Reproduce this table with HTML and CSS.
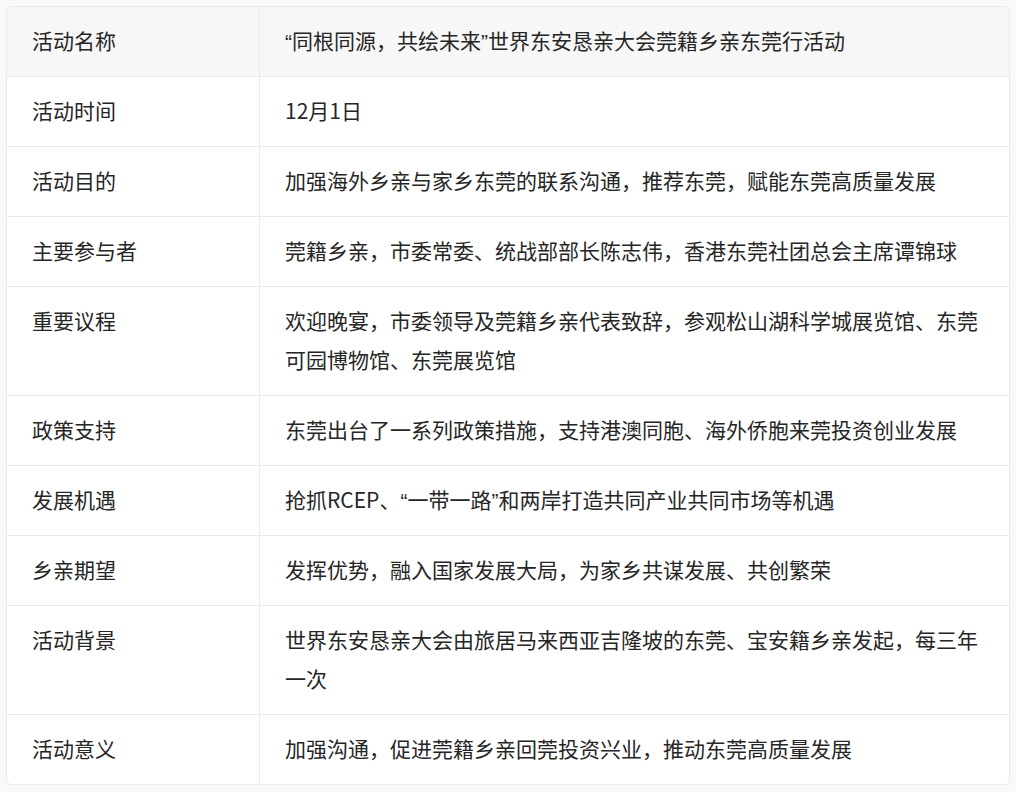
FILE: index.html
```html
<!DOCTYPE html>
<html lang="zh-CN">
<head>
<meta charset="utf-8">
<title>活动信息</title>
<link rel="stylesheet" href="styles.css">
</head>
<body>
<div class="card">
  <table class="info">
    <tbody>
      <tr class="head"><td class="k">活动名称</td><td class="v"><span class="q">“</span>同根同源，共绘未来<span class="q">”</span>世界东安恳亲大会莞籍乡亲东莞行活动</td></tr>
      <tr><td class="k">活动时间</td><td class="v">12月1日</td></tr>
      <tr><td class="k">活动目的</td><td class="v">加强海外乡亲与家乡东莞的联系沟通，推荐东莞，赋能东莞高质量发展</td></tr>
      <tr><td class="k">主要参与者</td><td class="v">莞籍乡亲，市委常委、统战部部长陈志伟，香港东莞社团总会主席谭锦球</td></tr>
      <tr><td class="k">重要议程</td><td class="v">欢迎晚宴，市委领导及莞籍乡亲代表致辞，参观松山湖科学城展览馆、东莞可园博物馆、东莞展览馆</td></tr>
      <tr><td class="k">政策支持</td><td class="v">东莞出台了一系列政策措施，支持港澳同胞、海外侨胞来莞投资创业发展</td></tr>
      <tr><td class="k">发展机遇</td><td class="v">抢抓RCEP、<span class="q">“</span>一带一路<span class="q">”</span>和两岸打造共同产业共同市场等机遇</td></tr>
      <tr><td class="k">乡亲期望</td><td class="v">发挥优势，融入国家发展大局，为家乡共谋发展、共创繁荣</td></tr>
      <tr><td class="k">活动背景</td><td class="v">世界东安恳亲大会由旅居马来西亚吉隆坡的东莞、宝安籍乡亲发起，每三年一次</td></tr>
      <tr class="last"><td class="k">活动意义</td><td class="v">加强沟通，促进莞籍乡亲回莞投资兴业，推动东莞高质量发展</td></tr>
    </tbody>
  </table>
</div>
</body>
</html>
```
FILE: styles.css
```css
html, body {
  margin: 0;
  padding: 0;
  background: #f8f9fa;
}
body {
  padding: 6px;
  font-family: "Noto Sans CJK SC", "Noto Sans", sans-serif;
  font-size: 21px;
  color: #262626;
}
.card {
  width: 1004px;
  box-sizing: border-box;
  border: 1px solid #ebebeb;
  border-radius: 5px;
  background: #ffffff;
  overflow: hidden;
}
.info {
  width: 100%;
  border-collapse: separate;
  border-spacing: 0;
  table-layout: fixed;
}
.info td {
  padding: 14px 25px 16px;
  line-height: 39px;
  vertical-align: top;
  border-bottom: 1px solid #ebebeb;
  text-align: left;
}
.info tr.last td {
  border-bottom: none;
}
.info td.k {
  width: 202px;
  border-right: 1px solid #ebebeb;
}
.info tr.head td {
  background: #f7f7f7;
}
.q {
  font-family: "Liberation Sans", "Noto Sans", sans-serif;
  line-height: 0;
}
```
